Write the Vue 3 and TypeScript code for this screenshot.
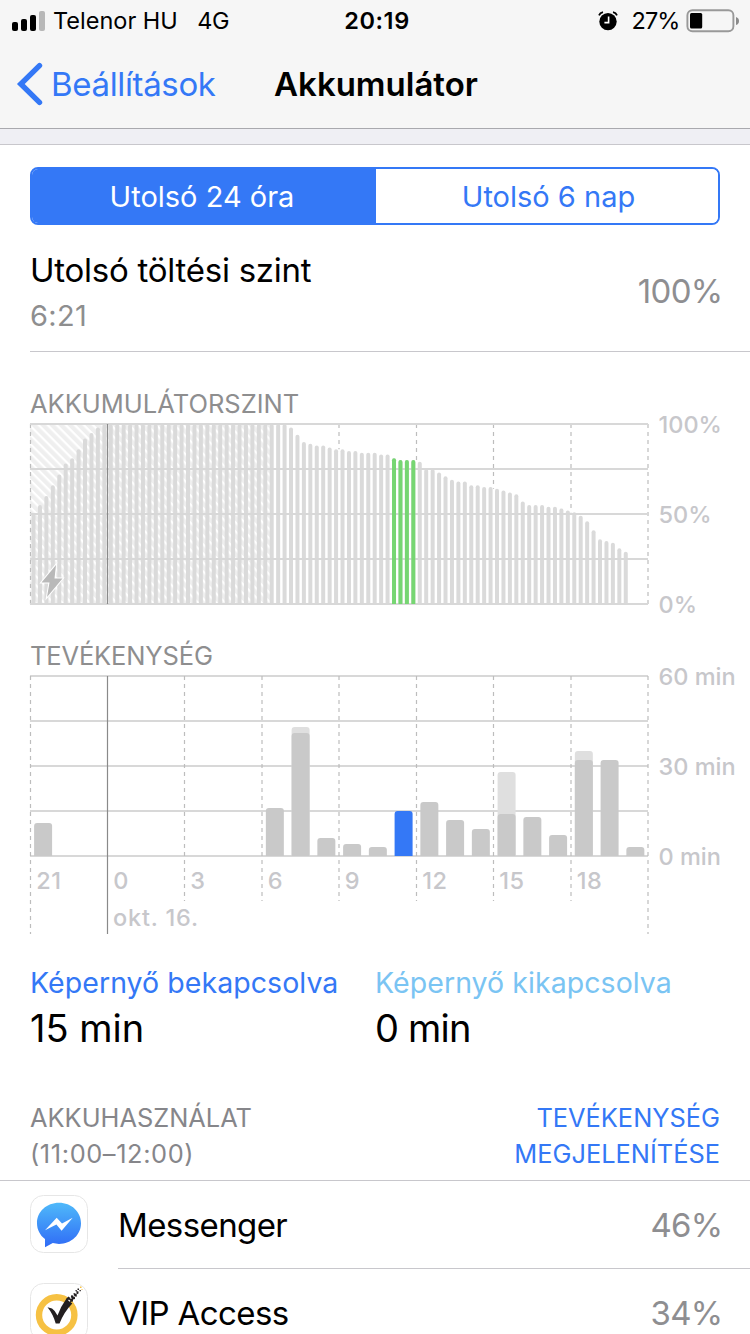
<script setup lang="ts">
interface HourUsage {
  hour: number
  on: number
  total?: number
  selected?: boolean
}

const HOUR_WIDTH = 25.75
const SLOT_WIDTH = HOUR_WIDTH / 4
const CHART_HEIGHT = 180

// Battery level per quarter of an hour, in percent
const levels: number[] = [
  50, 55, 60, 66, 72, 78, 81, 86, 92, 95, 98, 100,
  ...Array<number>(28).fill(100),
  98, 94, 90, 89, 88, 88, 87, 86, 86, 85,
  85, 84, 84, 84, 83, 83, 81, 80, 80, 80,
  79, 75, 75, 73, 71, 69, 68, 68, 66, 66,
  65, 65, 64, 63, 62, 61, 57, 55, 55, 55,
  54, 54, 53, 52, 51, 49, 46, 41, 36, 35,
  34, 31, 29,
]

const levelBars = levels.map((level, i) => {
  const x = 0.3 + SLOT_WIDTH * (i + 0.5) - 2
  const h = (CHART_HEIGHT * level) / 100
  const y = CHART_HEIGHT - h
  return {
    d: `M${x} ${CHART_HEIGHT}V${y + 2}a2 2 0 0 1 4 0V${CHART_HEIGHT}z`,
    selected: i >= 56 && i < 60,
  }
})

const usage: HourUsage[] = [
  { hour: 0, on: 11 },
  { hour: 9, on: 16 },
  { hour: 10, on: 41, total: 43 },
  { hour: 11, on: 6 },
  { hour: 12, on: 4 },
  { hour: 13, on: 3 },
  { hour: 14, on: 15, selected: true },
  { hour: 15, on: 18 },
  { hour: 16, on: 12 },
  { hour: 17, on: 9 },
  { hour: 18, on: 14, total: 28 },
  { hour: 19, on: 13 },
  { hour: 20, on: 7 },
  { hour: 21, on: 32, total: 35 },
  { hour: 22, on: 32 },
  { hour: 23, on: 3 },
]

function barPath(hour: number, minutes: number): string {
  const x = 4.1 + HOUR_WIDTH * hour
  const y = CHART_HEIGHT - minutes * 3
  return `M${x} ${CHART_HEIGHT}V${y + 3}q0 -3 3 -3h12q3 0 3 3V${CHART_HEIGHT}z`
}

const gridRows = [0, 45, 90, 135, 180]
const hourTicks = [
  { x: 0.5, label: '21', end: 258 },
  { x: 77.5, label: '0', end: 258 },
  { x: 154.5, label: '3', end: 225 },
  { x: 232, label: '6', end: 225 },
  { x: 309, label: '9', end: 225 },
  { x: 386.5, label: '12', end: 225 },
  { x: 463.5, label: '15', end: 225 },
  { x: 541, label: '18', end: 225 },
  { x: 618, label: '', end: 258 },
]
const dashedTicks = hourTicks.filter((t) => t.label !== '0')

// Hour lines of the level chart stop where the bars begin
const levelTicks = dashedTicks
  .map((t) => {
    const level = levels[Math.round(t.x / SLOT_WIDTH)] ?? 0
    return { x: t.x, end: t.x < 1 ? CHART_HEIGHT : (CHART_HEIGHT * (100 - level)) / 100 }
  })
  .filter((t) => t.end > 0)
</script>

<template>
  <div class="screen">
    <header class="top">
      <div class="status">
        <div class="status-side">
          <svg class="signal" width="33" height="20" viewBox="0 0 33 20">
            <rect x="0" y="11" width="6" height="9" rx="2" />
            <rect x="9" y="8" width="6" height="12" rx="2" />
            <rect x="18" y="4" width="6" height="16" rx="2" />
            <rect x="27" y="0" width="6" height="20" rx="2" fill="#b8b8b8" />
          </svg>
          <span class="carrier">Telenor HU</span>
          <span class="network">4G</span>
        </div>
        <span class="clock">20:19</span>
        <div class="status-side right">
          <svg class="alarm" width="20" height="20" viewBox="0 0 20 20">
            <circle cx="10" cy="10.6" r="8.7" />
            <path d="M1 4.4Q2 1.8 5 1.2M19 4.4Q18 1.8 15 1.2" fill="none" stroke="#000" stroke-width="1.7" />
            <path d="M10.6 5.6V11.6H6.4" fill="none" stroke="#fff" stroke-width="1.6" />
          </svg>
          <span class="pct">27%</span>
          <svg class="battery" width="54" height="24" viewBox="0 0 54 24">
            <rect x="1.4" y="1.2" width="46" height="21" rx="5" fill="none" stroke="#999" stroke-width="1.9" />
            <rect x="4" y="4" width="12.2" height="15.4" rx="1.5" />
            <path d="M50 8v8q3-1 3-4t-3-4z" fill="#8a8a8a" />
          </svg>
        </div>
      </div>
      <nav class="nav">
        <a class="back">
          <svg width="28" height="44" viewBox="0 0 28 44">
            <path d="M23.500 3.600L4.800 22 23.500 40.400" fill="none" stroke="#3478f6" stroke-width="5.400" stroke-linecap="round" />
          </svg>
          <span class="back-label">Beállítások</span>
        </a>
        <h1>Akkumulátor</h1>
        <span></span>
      </nav>
    </header>
    <div class="gap"></div>

    <div class="segmented">
      <button class="segment active">Utolsó 24 óra</button>
      <button class="segment rest">Utolsó 6 nap</button>
    </div>

    <section class="charge">
      <div class="charge-text">
        <div class="charge-title">Utolsó töltési szint</div>
        <div class="charge-time">6:21</div>
      </div>
      <div class="value">100%</div>
    </section>

    <section class="chart">
      <h2>AKKUMULÁTORSZINT</h2>
      <svg class="plot" width="720" height="180">
        <defs>
          <pattern id="hatch" width="6.4" height="6.4" patternUnits="userSpaceOnUse" patternTransform="rotate(-45)">
            <rect width="4.2" height="6.4" fill="#efefef" />
          </pattern>
        </defs>
        <rect x="0" y="0" width="241.5" height="180" fill="url(#hatch)" />
        <line v-for="t in levelTicks" :key="t.x" :x1="t.x" :x2="t.x" y1="0" :y2="t.end" class="dash" />
        <path v-for="(b, i) in levelBars" :key="i" :d="b.d" fill="#dadada" />
        <line v-for="y in gridRows" :key="y" x1="0" x2="618" :y1="y" :y2="y" class="grid" />
        <path v-for="(b, i) in levelBars.filter((v) => v.selected)" :key="'s' + i" :d="b.d" fill="#76d672" />
        <line x1="77.5" x2="77.5" y1="0" y2="180" class="midnight" />
        <path
          d="M26 141L11.5 158.500H19.500L17 173L32.500 154.500H24.500z"
          fill="#b9b9b9" stroke="#fff" stroke-width="2" paint-order="stroke"
        />
        <text x="628.500" y="9" class="axis">100%</text>
        <text x="628.500" y="99" class="axis">50%</text>
        <text x="628.500" y="189" class="axis">0%</text>
      </svg>
    </section>

    <section class="chart">
      <h2 class="h-activity">TEVÉKENYSÉG</h2>
      <svg class="plot" width="720" height="258">
        <line v-for="y in gridRows" :key="y" x1="0" x2="618" :y1="y" :y2="y" class="grid" />
        <line v-for="t in dashedTicks" :key="t.x" :x1="t.x" :x2="t.x" y1="0" :y2="t.end" class="dash" />
        <line x1="77.5" x2="77.5" y1="0" y2="258" class="midnight" />
        <template v-for="u in usage" :key="u.hour">
          <path v-if="u.total" :d="barPath(u.hour, u.total)" fill="#dfdfdf" />
          <path :d="barPath(u.hour, u.on)" :fill="u.selected ? '#3478f6' : '#c9c9c9'" />
        </template>
        <text v-for="t in hourTicks" :key="'l' + t.x" :x="t.x + 5.7" y="213" class="axis hours">{{ t.label }}</text>
        <text x="83" y="249.500" class="axis date">okt. 16.</text>
        <text x="628.500" y="9" class="axis">60 min</text>
        <text x="628.500" y="99" class="axis">30 min</text>
        <text x="628.500" y="189" class="axis">0 min</text>
      </svg>
    </section>

    <section class="totals">
      <div>
        <div class="total-label on">Képernyő bekapcsolva</div>
        <div class="total-value">15 min</div>
      </div>
      <div>
        <div class="total-label off">Képernyő kikapcsolva</div>
        <div class="total-value tight">0 min</div>
      </div>
    </section>

    <section class="usage-head">
      <div class="usage-title">AKKUHASZNÁLAT<br /><span class="period">(11:00–12:00)</span></div>
      <a class="usage-link">TEVÉKENYSÉG<br />MEGJELENÍTÉSE</a>
    </section>

    <ul class="apps">
      <li>
        <svg class="app-icon" width="58" height="58" viewBox="0 0 58 58">
          <defs>
            <linearGradient id="bubble" x1="0" y1="0" x2="0" y2="1">
              <stop offset="0" stop-color="#4fb9fa" />
              <stop offset="1" stop-color="#2f6bf6" />
            </linearGradient>
          </defs>
          <rect x="0.5" y="0.5" width="57" height="57" rx="13" fill="#fff" stroke="#e6e6e6" />
          <path
            d="M29 7.800C16.600 7.800 7 16.700 7 28.200C7 34.600 10 40.200 15 44V52.300L22.800 48.100C24.800 48.600 26.900 48.900 29 48.900C41.400 48.900 51 39.800 51 28.300S41.400 7.800 29 7.800z"
            fill="url(#bubble)"
          />
          <path d="M15 35.200L26.700 22.700 32 28.400 42.700 22.700 31.600 35.700 26.400 29.600z" fill="#fff" />
        </svg>
        <div class="app-row">
          <span class="app-name">Messenger</span>
          <span class="value">46%</span>
        </div>
      </li>
      <li>
        <svg class="app-icon" width="58" height="58" viewBox="0 0 58 58">
          <rect x="0.5" y="0.5" width="57" height="57" rx="13" fill="#fff" stroke="#e6e6e6" />
          <circle cx="26.700" cy="32" r="17.700" fill="none" stroke="#f6c143" stroke-width="6.400" />
          <path d="M17.500 24.300L22 25.600Q25.500 28 27.500 32.500Q31 23 36.500 15.500L42.300 20.500Q34 29 29.500 40.500H25.700Q23 31 17.500 24.300z" fill="#231f20" />
          <path
            d="M36 16l2.500-2.500 2 1.500 1-3 2.500 1-.5-3 2.500.5.500-2.500 2 .5v2l-2 1 .5 2-2 0 0 2.500-2 .5 0 2-2.500.5z"
            fill="#231f20"
          />
          <path d="M40 14.500l1.500 1M43.500 12.500l1 1.500M38.500 17l1.500 1.200M45.500 9.500l1 1" stroke="#fff" stroke-width="1.100" />
          <path d="M47.500 5.500h1.500v1.500h-1.500zM49.500 7h1.300v1.300h-1.300zM45.500 7h1.300v1.300h-1.300z" fill="#231f20" />
          <path d="M50 3.500h1.500v1.500h-1.500zM51.500 6h1v1h-1z" fill="#f6c143" />
        </svg>
        <div class="app-row">
          <span class="app-name">VIP Access</span>
          <span class="value">34%</span>
        </div>
      </li>
    </ul>
  </div>
</template>

<style>
body {
  margin: 0;
  background: #fff;
}
</style>

<style scoped>
.screen {
  width: 750px;
  height: 1334px;
  overflow: hidden;
  background: #fff;
  color: #000;
  font-family: Inter, "Liberation Sans", sans-serif;
  font-size: 33px;
  white-space: nowrap;
}
.top {
  height: 128px;
  background: #f6f6f6;
  border-bottom: 1px solid #a9a9ae;
}
.status {
  display: grid;
  grid-template-columns: 1fr auto 1fr;
  align-items: center;
  height: 41px;
  padding: 0 10px 0 12px;
  font-size: 23.5px;
}
.status-side {
  display: flex;
  align-items: center;
}
.right {
  justify-content: flex-end;
}
.carrier {
  margin-left: 8px;
}
.network {
  margin-left: 19.5px;
  letter-spacing: -0.6px;
}
.clock {
  margin-left: 2px;
  font-weight: 600;
  letter-spacing: 0.6px;
}
.pct {
  margin: 0 6.5px 0 13px;
  letter-spacing: -0.9px;
}
.nav {
  display: grid;
  grid-template-columns: 1fr auto 1fr;
  align-items: center;
  height: 86px;
}
.back {
  display: flex;
  align-items: center;
  margin-left: 16px;
  color: #3478f6;
}
.back-label {
  margin-left: 7px;
  letter-spacing: -0.35px;
}
h1 {
  margin: 0 0 0 2px;
  font-size: 33px;
  font-weight: 600;
}
.gap {
  height: 15px;
  background: #efeff4;
  border-bottom: 1px solid #c8c7cc;
}
.segmented {
  display: flex;
  height: 54px;
  margin: 22px 30px 0;
  border: 2px solid #3478f6;
  border-radius: 8px;
  overflow: hidden;
}
.segment {
  flex: 1;
  padding: 1px 0 0;
  border: 0;
  background: #fff;
  color: #3478f6;
  font: 400 29px/53px Inter, "Liberation Sans", sans-serif;
}
.active {
  flex: 0 0 344px;
  padding-right: 4px;
  background: #3478f6;
  color: #fff;
}
.rest {
  padding-left: 3px;
}
.charge {
  display: flex;
  justify-content: space-between;
  align-items: center;
  box-sizing: border-box;
  height: 127px;
  margin-left: 30px;
  padding-right: 30px;
  border-bottom: 1px solid #c8c7cc;
}
.charge-text {
  padding-top: 10px;
}
.charge-title {
  line-height: 45px;
  letter-spacing: -0.25px;
}
.charge-time {
  font-size: 29px;
  line-height: 45px;
  letter-spacing: 0.3px;
  color: #8e8e8f;
}
.charge .value {
  padding-top: 6px;
}
.value {
  margin-right: -2.5px;
  letter-spacing: -0.7px;
  color: #8e8e91;
}
.chart {
  margin-left: 30px;
  padding-top: 32px;
}
h2 {
  margin: 0;
  height: 40px;
  font-size: 25.5px;
  font-weight: 400;
  line-height: 40px;
  color: #8e8e8f;
}
.h-activity {
  letter-spacing: -0.15px;
}
.plot {
  display: block;
  overflow: visible;
}
.grid {
  stroke: #d8d8d8;
  stroke-width: 2;
}
.dash {
  stroke: #bdbdbd;
  stroke-width: 1.2;
  stroke-dasharray: 4 4;
}
.midnight {
  stroke: #8a8a8a;
  stroke-width: 1.2;
}
.axis {
  fill: #c7c7cb;
  font-size: 23.5px;
  font-weight: 500;
}
.hours {
  letter-spacing: 0.6px;
}
.date {
  letter-spacing: 0.8px;
}
.totals {
  display: grid;
  grid-template-columns: 345px 1fr;
  margin: 26px 0 0 30px;
}
.total-label {
  font-size: 28.5px;
  line-height: 45px;
  letter-spacing: 0.05px;
}
.on {
  color: #3478f6;
}
.off {
  color: #7ac4f3;
}
.total-value {
  font-size: 38px;
  line-height: 47px;
}
.tight {
  letter-spacing: -0.8px;
}
.usage-head {
  display: flex;
  justify-content: space-between;
  height: 80px;
  padding: 0 30px;
  margin-top: 48px;
  font-size: 25.4px;
  line-height: 36px;
}
.usage-title {
  color: #86868a;
}
.period {
  letter-spacing: 0.6px;
}
.usage-link {
  color: #3478f6;
  text-align: right;
}
.apps {
  margin: 0;
  padding: 0;
  list-style: none;
  border-top: 1px solid #c8c7cc;
}
.apps li {
  display: flex;
  height: 88px;
  padding-left: 30px;
}
.app-icon {
  margin: 14px 30px 0 0;
}
.app-name {
  letter-spacing: -0.6px;
}
.app-row {
  flex: 1;
  display: flex;
  justify-content: space-between;
  box-sizing: border-box;
  height: 88px;
  padding-right: 30px;
  line-height: 89px;
  border-bottom: 1px solid #c8c7cc;
}
</style>
